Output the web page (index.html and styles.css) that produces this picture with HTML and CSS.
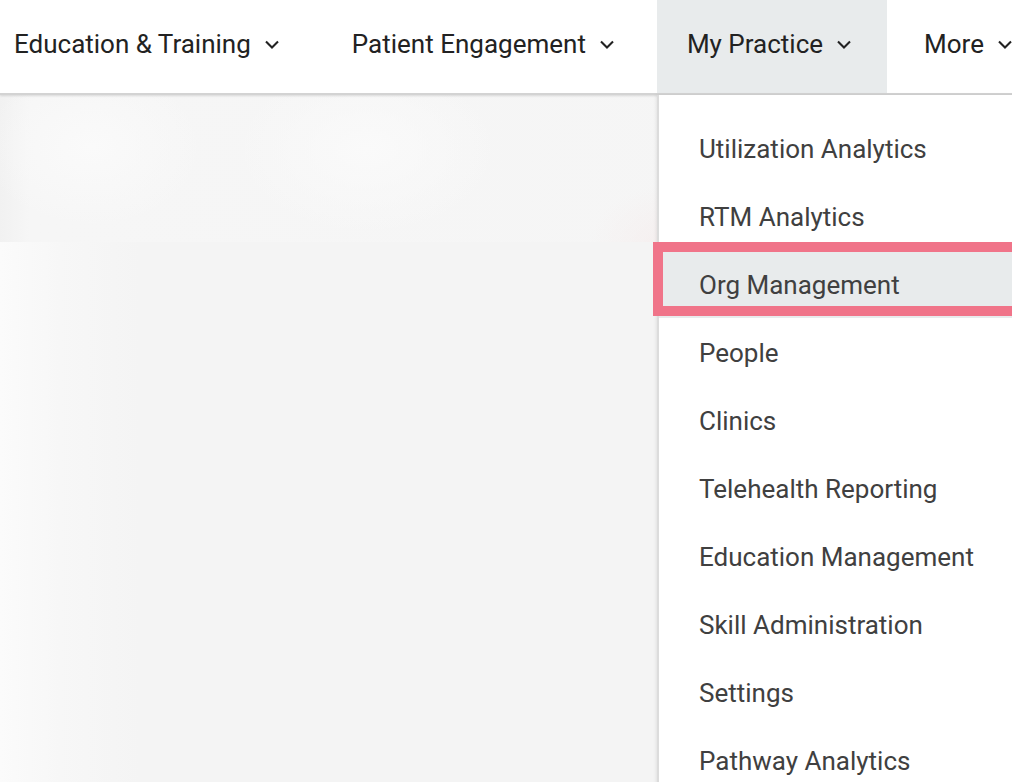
FILE: index.html
```html
<!DOCTYPE html>
<html lang="en">
<head>
<meta charset="utf-8">
<title>My Practice</title>
<link rel="stylesheet" href="styles.css">
</head>
<body>
<header class="topbar">
  <nav class="nav">
    <div class="nav-item first">Education &amp; Training<svg class="chev" viewBox="0 0 24 24"><path d="M6 9.5l6 6 6-6"/></svg></div>
    <div class="nav-item">Patient Engagement<svg class="chev" viewBox="0 0 24 24"><path d="M6 9.5l6 6 6-6"/></svg></div>
    <div class="nav-item active">My Practice<svg class="chev" viewBox="0 0 24 24"><path d="M6 9.5l6 6 6-6"/></svg></div>
    <div class="nav-item">More<svg class="chev" viewBox="0 0 24 24"><path d="M6 9.5l6 6 6-6"/></svg></div>
  </nav>
</header>
<main class="content">
  <div class="blur-hero"></div>
  <div class="blur-rest"></div>
  <ul class="dropdown">
    <li class="dd-item">Utilization Analytics</li>
    <li class="dd-item">RTM Analytics</li>
    <li class="dd-item hover">Org Management</li>
    <li class="dd-item">People</li>
    <li class="dd-item">Clinics</li>
    <li class="dd-item">Telehealth Reporting</li>
    <li class="dd-item">Education Management</li>
    <li class="dd-item">Skill Administration</li>
    <li class="dd-item">Settings</li>
    <li class="dd-item">Pathway Analytics</li>
  </ul>
  <div class="annotation"></div>
</main>
</body>
</html>
```
FILE: styles.css
```css
html, body {
  margin: 0;
  padding: 0;
  height: 100%;
  overflow: hidden;
}
body {
  background: #f4f4f4;
  font-family: Roboto, "Liberation Sans", Arial, sans-serif;
  width: 1012px;
}
.topbar {
  position: relative;
  z-index: 2;
  height: 93px;
  background: #fff;
  border-bottom: 2px solid #d3d3d3;
  box-shadow: 0 1px 2px rgba(0, 0, 0, 0.12);
  overflow: hidden;
}
.nav {
  display: flex;
  gap: 7px;
  height: 93px;
  margin-left: -16px;
  white-space: nowrap;
}
.nav-item {
  display: flex;
  align-items: center;
  box-sizing: border-box;
  height: 93px;
  padding: 0 31px 6px 30px;
  font-size: 26px;
  color: #222;
  flex: none;
}
.nav-item.active {
  background: #e8ebec;
}
.chev {
  width: 24px;
  height: 24px;
  margin-left: 9px;
  margin-top: 1px;
  fill: none;
  stroke: #222;
  stroke-width: 2.1;
  stroke-linecap: butt;
}
.content {
  position: relative;
  height: 687px;
}
.blur-hero {
  height: 147px;
  background:
    radial-gradient(ellipse 110px 80px at 92px 52px, #fafafa 0%, rgba(250,250,250,0) 100%),
    radial-gradient(ellipse 130px 85px at 367px 54px, #fafafa 0%, rgba(250,250,250,0) 100%),
    radial-gradient(ellipse 80px 60px at 670px 150px, rgba(246,236,236,0.7) 0%, rgba(246,240,240,0) 100%),
    linear-gradient(90deg, #f1f1f1 0px, #f6f6f6 30px, #f5f5f5 100%);
}
.blur-rest {
  height: 540px;
  background: linear-gradient(90deg, #fbfbfb 0px, #f7f7f7 60px, #f4f4f4 140px, #f4f4f4 100%);
}
.dropdown {
  position: absolute;
  top: 0;
  left: 657px;
  width: 380px;
  height: 720px;
  margin: 0;
  padding: 19px 0 0;
  list-style: none;
  background: #fff;
  border-left: 2px solid #dcdcdc;
  box-shadow: -1px 0 3px rgba(0, 0, 0, 0.08);
  z-index: 3;
}
.dd-item {
  height: 66px;
  line-height: 66px;
  padding: 2px 0 0 40px;
  font-size: 26px;
  color: #404040;
  white-space: nowrap;
}
.dd-item.hover {
  background: #e8ebec;
}
.annotation {
  position: absolute;
  z-index: 4;
  left: 653px;
  top: 147px;
  width: 350px;
  height: 54px;
  border: 10px solid #f07489;
}
```
